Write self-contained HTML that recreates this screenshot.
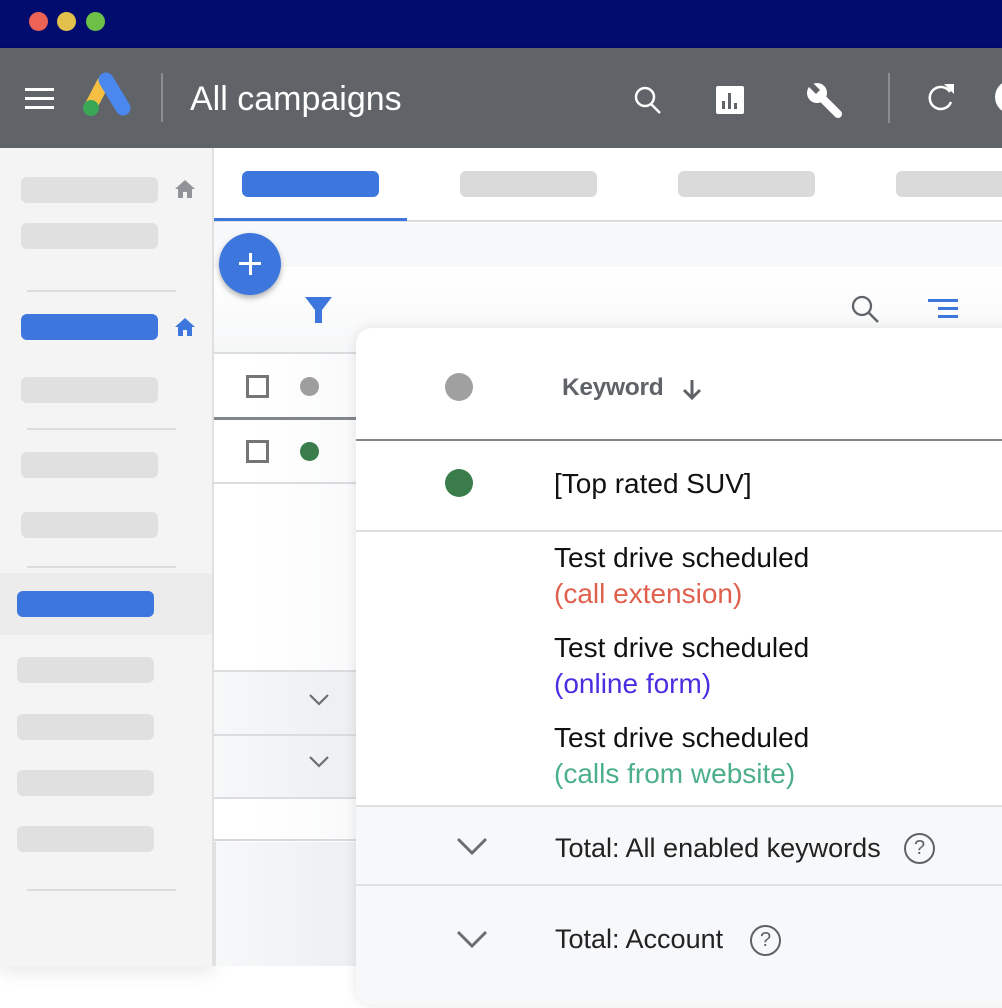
<!DOCTYPE html>
<html><head><style>
*{margin:0;padding:0;box-sizing:border-box}
body{width:1002px;height:1008px;overflow:hidden;background:#fff;position:relative;font-family:"Liberation Sans",sans-serif}
.a{position:absolute}
.pill{position:absolute;height:26px;border-radius:6px;background:#e0e0e0}
.blue{background:#3d77dd}
.ln{position:absolute;height:2px;background:#dadce0}
.t{position:absolute;white-space:nowrap}
</style></head><body>
<div class="a" style="left:0;top:0;width:1002px;height:48px;background:#020b6e"></div>
<div class="a" style="left:29px;top:12px;width:19px;height:19px;border-radius:50%;background:#ec6356"></div>
<div class="a" style="left:57px;top:12px;width:19px;height:19px;border-radius:50%;background:#e2c04c"></div>
<div class="a" style="left:86px;top:12px;width:19px;height:19px;border-radius:50%;background:#6cc048"></div>
<div class="a" style="left:0;top:48px;width:1002px;height:100px;background:#606368;box-shadow:0 2px 4px rgba(0,0,0,.25)"></div>
<svg class="a" style="left:0;top:48px" width="1002" height="100">
<g fill="#fff"><rect x="25" y="40" width="29" height="3"/><rect x="25" y="49" width="29" height="3"/><rect x="25" y="58" width="29" height="3"/></g>
<line x1="103" y1="35" x2="91" y2="58" stroke="#f4bf42" stroke-width="13" stroke-linecap="round"/>
<line x1="106" y1="32" x2="123" y2="60" stroke="#4a87ee" stroke-width="15" stroke-linecap="round"/>
<circle cx="91" cy="60" r="8" fill="#3aa757"/>
<rect x="161" y="25" width="2" height="49" fill="#8a8d91"/>
<text x="190" y="62" font-family="Liberation Sans" font-size="34" fill="#fff">All campaigns</text>
<circle cx="645" cy="49" r="9" fill="none" stroke="#fff" stroke-width="2.5"/>
<line x1="651" y1="56" x2="660" y2="65" stroke="#fff" stroke-width="2.5"/>
<rect x="716" y="38" width="28" height="28" rx="2" fill="#fff"/>
<g fill="#606368"><rect x="722" y="53" width="3" height="8"/><rect x="728" y="45" width="3" height="16"/><rect x="734" y="55" width="3" height="6"/></g>
<line x1="818" y1="46" x2="838" y2="66" stroke="#fff" stroke-width="8" stroke-linecap="round"/>
<circle cx="817" cy="45" r="10" fill="#fff"/>
<polygon points="811,33 820,42 816,46 807,37" fill="#606368"/>
<rect x="888" y="25" width="2" height="50" fill="#8a8d91"/>
<path d="M950 44 a11 11 0 1 0 1 10" fill="none" stroke="#fff" stroke-width="2.5"/>
<path d="M944 36 l10 0 0 10z" fill="#fff"/>
<circle cx="1012" cy="49" r="17" fill="#fff"/>
</svg>
<div class="a" style="left:0;top:148px;width:214px;height:818px;background:#f4f4f4;border-right:2px solid #e0e0e0;box-shadow:0 8px 16px rgba(0,0,0,.08)"></div>
<div class="pill" style="left:21px;top:177px;width:137px"></div>
<div class="pill" style="left:21px;top:223px;width:137px"></div>
<div class="ln" style="left:27px;top:290px;width:149px"></div>
<div class="pill blue" style="left:21px;top:314px;width:137px"></div>
<div class="pill" style="left:21px;top:377px;width:137px"></div>
<div class="ln" style="left:27px;top:428px;width:149px"></div>
<div class="pill" style="left:21px;top:452px;width:137px"></div>
<div class="pill" style="left:21px;top:512px;width:137px"></div>
<div class="ln" style="left:27px;top:566px;width:149px"></div>
<div class="a" style="left:0;top:573px;width:212px;height:62px;background:#ececec"></div>
<div class="pill blue" style="left:17px;top:591px;width:137px"></div>
<div class="pill" style="left:17px;top:657px;width:137px"></div>
<div class="pill" style="left:17px;top:714px;width:137px"></div>
<div class="pill" style="left:17px;top:770px;width:137px"></div>
<div class="pill" style="left:17px;top:826px;width:137px"></div>
<div class="ln" style="left:27px;top:889px;width:149px"></div>
<svg class="a" style="left:174px;top:178px" width="22" height="22"><path d="M11 2 L21 11 H18 V20 H13 V14 H9 V20 H4 V11 H1z" fill="#909398"/></svg>
<svg class="a" style="left:174px;top:316px" width="22" height="22"><path d="M11 2 L21 11 H18 V20 H13 V14 H9 V20 H4 V11 H1z" fill="#3d77dd"/></svg>
<div class="a" style="left:214px;top:148px;width:788px;height:74px;background:#fff;border-bottom:2px solid #dadce0"></div>
<div class="pill blue" style="left:242px;top:171px;width:137px"></div>
<div class="pill" style="left:460px;top:171px;width:137px;background:#dadada"></div>
<div class="pill" style="left:678px;top:171px;width:137px;background:#dadada"></div>
<div class="pill" style="left:896px;top:171px;width:137px;background:#dadada"></div>
<div class="a" style="left:214px;top:218px;width:193px;height:3px;background:#3d77dd"></div>
<div class="a" style="left:214px;top:223px;width:788px;height:44px;background:#f7f8fa"></div>
<div class="a" style="left:214px;top:267px;width:788px;height:574px;background:linear-gradient(90deg,#fff 0%,#fff 5%,#f3f4f6 30%,#f7f8f9 100%);border-bottom:2px solid #d6d8db"></div>
<div class="a" style="left:214px;top:267px;width:788px;height:86px;background:linear-gradient(180deg,#fff,#f6f7f8)"></div>
<div class="a" style="left:214px;top:352px;width:150px;height:2px;background:#dadce0"></div>
<div class="a" style="left:214px;top:417px;width:150px;height:3px;background:#80868b"></div>
<div class="a" style="left:214px;top:482px;width:150px;height:2px;background:#dadce0"></div>
<div class="a" style="left:214px;top:670px;width:150px;height:127px;background:linear-gradient(90deg,#f7f8f9,#eceef0)"></div>
<div class="a" style="left:214px;top:670px;width:150px;height:2px;background:#dadce0"></div>
<div class="a" style="left:214px;top:734px;width:150px;height:2px;background:#dadce0"></div>
<div class="a" style="left:214px;top:797px;width:150px;height:2px;background:#dadce0"></div>
<div class="a" style="left:214px;top:842px;width:150px;height:124px;background:linear-gradient(90deg,#f7f8f9,#eceef0);border-left:2px solid #e0e0e0"></div>
<div class="a" style="left:246px;top:375px;width:23px;height:23px;border:3px solid #757575"></div>
<div class="a" style="left:300px;top:377px;width:19px;height:19px;border-radius:50%;background:#9e9e9e"></div>
<div class="a" style="left:246px;top:440px;width:23px;height:23px;border:3px solid #757575"></div>
<div class="a" style="left:300px;top:442px;width:19px;height:19px;border-radius:50%;background:#3a7d4a"></div>
<svg class="a" style="left:300px;top:690px" width="40" height="90"><path d="M10 5 l9 9 9 -9M10 67 l9 9 9 -9" fill="none" stroke="#6b6e72" stroke-width="2.2"/></svg>
<svg class="a" style="left:300px;top:290px" width="700" height="40">
<path d="M5 7 H32 L22 20 V33 H15 V20z" fill="#3d77dd"/>
<circle cx="562" cy="16" r="9" fill="none" stroke="#606368" stroke-width="2.3"/>
<line x1="568" y1="22" x2="578" y2="32" stroke="#606368" stroke-width="2.5"/>
<g fill="#3d77dd"><rect x="628" y="9" width="30" height="3"/><rect x="638" y="17" width="20" height="3"/><rect x="638" y="25" width="20" height="3"/></g>
</svg>
<div class="a" style="left:219px;top:233px;width:62px;height:62px;border-radius:50%;background:#3d77dd;box-shadow:0 3px 6px rgba(0,0,0,.3)"></div>
<div class="a" style="left:239px;top:262px;width:22px;height:3px;background:#fff"></div>
<div class="a" style="left:248.5px;top:253px;width:3px;height:22px;background:#fff"></div>
<div class="a" style="left:356px;top:328px;width:680px;height:677px;border-radius:16px;background:#fff;box-shadow:0 0 12px rgba(0,0,0,.1);overflow:hidden">
 <div class="a" style="left:0;top:478px;width:680px;height:199px;background:#f7f8fa"></div>
 <div class="a" style="left:0;top:111px;width:680px;height:2px;background:#80868b"></div>
 <div class="a" style="left:0;top:202px;width:680px;height:2px;background:#e0e0e0"></div>
 <div class="a" style="left:0;top:477px;width:680px;height:2px;background:#e0e0e0"></div>
 <div class="a" style="left:0;top:556px;width:680px;height:2px;background:#e0e0e0"></div>
 <div class="a" style="left:89px;top:45px;width:28px;height:28px;border-radius:50%;background:#a0a0a0"></div>
 <div class="a" style="left:89px;top:141px;width:28px;height:28px;border-radius:50%;background:#3a7d4a"></div>
 <div class="t" style="left:206px;top:46px;font-size:24.5px;color:#5f6368;font-weight:bold;letter-spacing:-0.3px">Keyword</div>
 <svg class="a" style="left:322px;top:48px" width="30" height="30"><path d="M14 4 V22 M6 14 l8 8 8 -8" fill="none" stroke="#5f6368" stroke-width="3"/></svg>
 <div class="t" style="left:198px;top:140px;font-size:28px;color:#111">[Top rated SUV]</div>
 <div class="t" style="left:198px;top:212px;font-size:28px;line-height:36px;color:#111">Test drive scheduled<br><span style="color:#e0604e">(call extension)</span></div>
 <div class="t" style="left:198px;top:302px;font-size:28px;line-height:36px;color:#111">Test drive scheduled<br><span style="color:#4a2fe0">(online form)</span></div>
 <div class="t" style="left:198px;top:392px;font-size:28px;line-height:36px;color:#111">Test drive scheduled<br><span style="color:#4caf8a">(calls from website)</span></div>
 <svg class="a" style="left:100px;top:505px" width="34" height="130"><path d="M2 6 l14 14 14 -14M2 99 l14 14 14 -14" fill="none" stroke="#6b6e72" stroke-width="3"/></svg>
 <div class="t" style="left:199px;top:505px;font-size:27px;color:#222">Total: All enabled keywords</div>
 <div class="t" style="left:199px;top:596px;font-size:27px;color:#222">Total: Account</div>
 <div class="a" style="left:548px;top:505px;width:31px;height:31px;border-radius:50%;border:2px solid #5f6368;font-size:20px;color:#5f6368;text-align:center;line-height:27px">?</div>
 <div class="a" style="left:394px;top:597px;width:31px;height:31px;border-radius:50%;border:2px solid #5f6368;font-size:20px;color:#5f6368;text-align:center;line-height:27px">?</div>
</div>
</body></html>
